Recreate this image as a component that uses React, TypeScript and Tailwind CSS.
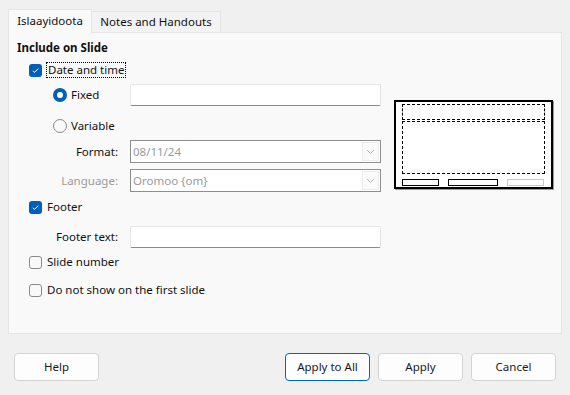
import React from "react";

const font = { fontFamily: '"Noto Sans", "Open Sans", sans-serif' };

const CheckBox = ({ checked }: { checked: boolean }) =>
  checked ? (
    <span className="w-[13px] h-[13px] rounded-[3px] bg-[#005fb8] flex items-center justify-center shrink-0">
      <svg width="9" height="9" viewBox="0 0 9 9">
        <path d="M1.8 4.8 L3.6 6.4 L7.2 2.6" stroke="#fff" strokeWidth="1" fill="none" />
      </svg>
    </span>
  ) : (
    <span className="w-[13px] h-[13px] rounded-[3px] border border-[#8a8a8a] bg-[#f9f9f9] shrink-0" />
  );

const Radio = ({ checked }: { checked: boolean }) =>
  checked ? (
    <span className="w-[14px] h-[14px] rounded-full bg-[#005fb8] flex items-center justify-center shrink-0">
      <span className="w-[6px] h-[6px] rounded-full bg-white" />
    </span>
  ) : (
    <span className="w-[14px] h-[14px] rounded-full border border-[#8a8a8a] bg-[#f9f9f9] shrink-0" />
  );

const TextBox = () => (
  <div className="w-[251px] h-[22px] bg-white border border-[#e5e5e5] border-b-[#8a8a8a] rounded-[2px]" />
);

const Combo = ({ value }: { value: string }) => (
  <div className="w-[251px] h-[23px] bg-white border border-[#8e8e8e] flex items-center">
    <span className="flex-1 pl-[2px] text-[#9a9a9a]">{value}</span>
    <span className="w-[17px] h-[19px] mr-[1px] border border-[#ececec] bg-[#fafafa] flex items-center justify-center">
      <svg width="9" height="6" viewBox="0 0 9 6">
        <path d="M1 1 L4.5 4.5 L8 1" stroke="#b8b8b8" strokeWidth="1" fill="none" />
      </svg>
    </span>
  </div>
);

const Button = ({ label, primary }: { label: string; primary?: boolean }) => (
  <button
    className={
      primary
        ? "w-[85px] h-[28px] rounded-[4px] bg-[#fdfdfd] border border-[#0067c0] text-[#1a1a1a]"
        : "w-[85px] h-[28px] rounded-[4px] bg-[#fdfdfd] border border-[#d3d3d3] text-[#1a1a1a]"
    }
  >
    {label}
  </button>
);

const Preview = () => (
  <div className="w-[159px] h-[89px] bg-white border-2 border-black shadow-[1px_1px_0_#9a9a9a] px-[6px] pt-[2px] flex flex-col">
    <div className="h-[16px] border border-dashed border-black" />
    <div className="h-[53px] mt-[1px] border border-dashed border-black" />
    <div className="flex mt-[5px] h-[7px]">
      <div className="w-[37px] border border-black" />
      <div className="w-[50px] ml-[9px] border border-black" />
      <div className="w-[37px] ml-[9px] border border-[#c8c8c8]" />
    </div>
  </div>
);

export default function App() {
  return (
    <div className="w-[570px] h-[395px] bg-[#f0f0f0] text-[11.5px] text-[#111] pt-[8px] px-[8px]" style={font}>
      <div className="flex items-end h-[24px]">
        <div className="w-[84px] h-[24px] bg-[#f9f9f9] border border-b-0 border-[#e5e5e5] flex items-center justify-center relative z-10 -mb-px pb-[1px]">
          Islaayidoota
        </div>
        <div className="w-[129px] h-[21px] bg-[#f3f3f3] border border-l-0 border-b-0 border-[#e5e5e5] flex items-center justify-center">
          Notes and Handouts
        </div>
      </div>
      <div className="w-[554px] h-[302px] bg-[#f9f9f9] border border-[#e5e5e5] flex">
        <div className="w-[372px] pl-[8px]">
          <div className="mt-[7px] h-[16px] flex items-center font-bold">Include on Slide</div>
          <div className="mt-[6px] h-[16px] flex items-center pl-[12px] gap-[4px]">
            <CheckBox checked />
            <span className="border border-dotted border-black px-[1px] leading-[14px]">Date and time</span>
          </div>
          <div className="mt-[6px] h-[22px] flex items-center">
            <div className="w-[113px] flex items-center pl-[36px] gap-[4px]">
              <Radio checked />
              <span>Fixed</span>
            </div>
            <TextBox />
          </div>
          <div className="mt-[12px] h-[16px] flex items-center pl-[36px] gap-[4px]">
            <Radio checked={false} />
            <span>Variable</span>
          </div>
          <div className="mt-[6px] h-[23px] flex items-center">
            <span className="w-[101px] text-right mr-[12px]">Format:</span>
            <Combo value="08/11/24" />
          </div>
          <div className="mt-[6px] h-[23px] flex items-center">
            <span className="w-[101px] text-right mr-[12px] text-[#9a9a9a]">Language:</span>
            <Combo value="Oromoo {om}" />
          </div>
          <div className="mt-[7px] h-[16px] flex items-center pl-[12px] gap-[5px]">
            <CheckBox checked />
            <span>Footer</span>
          </div>
          <div className="mt-[11px] h-[22px] flex items-center">
            <span className="w-[101px] text-right mr-[12px]">Footer text:</span>
            <TextBox />
          </div>
          <div className="mt-[6px] h-[16px] flex items-center pl-[12px] gap-[5px]">
            <CheckBox checked={false} />
            <span>Slide number</span>
          </div>
          <div className="mt-[12px] h-[16px] flex items-center pl-[12px] gap-[5px]">
            <CheckBox checked={false} />
            <span>Do not show on the first slide</span>
          </div>
        </div>
        <div className="ml-[13px] mt-[67px]">
          <Preview />
        </div>
      </div>
      <div className="flex items-center mt-[19px] px-[6px]">
        <Button label="Help" />
        <div className="flex-1" />
        <div className="flex gap-[8px]">
          <Button label="Apply to All" primary />
          <Button label="Apply" />
          <Button label="Cancel" />
        </div>
      </div>
    </div>
  );
}
